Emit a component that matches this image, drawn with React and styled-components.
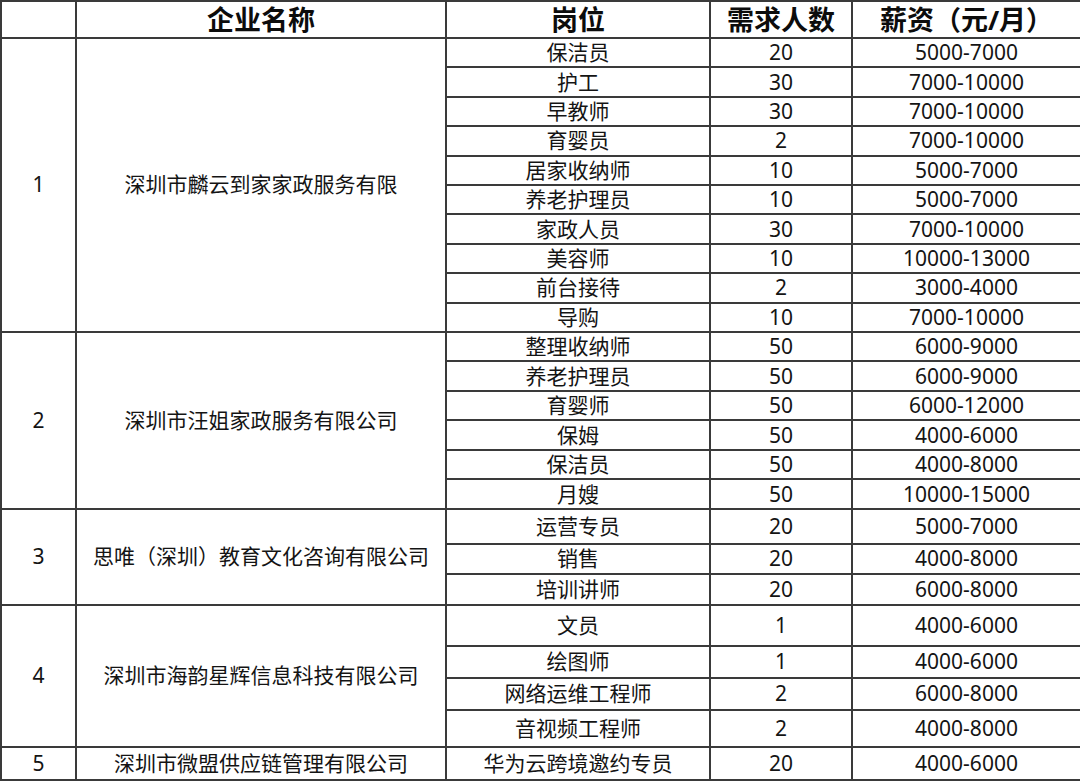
import React from 'react'
import styled, { createGlobalStyle } from 'styled-components'

const GlobalStyle = createGlobalStyle`
  html, body {
    margin: 0;
    padding: 0;
    background: #ffffff;
  }
  body {
    font-family: "Noto Sans", "Noto Sans CJK SC", sans-serif;
    color: #141414;
  }
`

const Table = styled.table`
  width: 1080px;
  table-layout: fixed;
  border-collapse: collapse;
  border: 2px solid #3a3a3a;
`

const Col = styled.col`
  width: ${props => props.$w}px;
`

const Row = styled.tr`
  height: ${props => props.$h}px;
`

const HeadCell = styled.th`
  border: 2px solid #3a3a3a;
  padding: 0;
  font-size: 27px;
  font-weight: 700;
  line-height: 1;
  text-align: center;
  vertical-align: middle;
  color: #0c0c0c;
`

const Cell = styled.td`
  border: 2px solid #3a3a3a;
  padding: 0;
  font-size: 21px;
  line-height: 1;
  text-align: center;
  vertical-align: middle;
  white-space: nowrap;
`

const columns = [75, 370, 264, 142, 229]

const companies = [
    {
        no: 1,
        name: '深圳市麟云到家家政服务有限',
        rows: [
            ['保洁员', '20', '5000-7000', 29.4],
            ['护工', '30', '7000-10000', 29.4],
            ['早教师', '30', '7000-10000', 29.4],
            ['育婴员', '2', '7000-10000', 29.4],
            ['居家收纳师', '10', '5000-7000', 29.4],
            ['养老护理员', '10', '5000-7000', 29.4],
            ['家政人员', '30', '7000-10000', 29.4],
            ['美容师', '10', '10000-13000', 29.4],
            ['前台接待', '2', '3000-4000', 29.4],
            ['导购', '10', '7000-10000', 29.4]
        ]
    },
    {
        no: 2,
        name: '深圳市汪姐家政服务有限公司',
        rows: [
            ['整理收纳师', '50', '6000-9000', 29.5],
            ['养老护理员', '50', '6000-9000', 29.5],
            ['育婴师', '50', '6000-12000', 29.5],
            ['保姆', '50', '4000-6000', 29.5],
            ['保洁员', '50', '4000-8000', 29.5],
            ['月嫂', '50', '10000-15000', 29.5]
        ]
    },
    {
        no: 3,
        name: '思唯（深圳）教育文化咨询有限公司',
        rows: [
            ['运营专员', '20', '5000-7000', 35],
            ['销售', '20', '4000-8000', 30],
            ['培训讲师', '20', '6000-8000', 31]
        ]
    },
    {
        no: 4,
        name: '深圳市海韵星辉信息科技有限公司',
        rows: [
            ['文员', '1', '4000-6000', 41],
            ['绘图师', '1', '4000-6000', 32],
            ['网络运维工程师', '2', '6000-8000', 32],
            ['音视频工程师', '2', '4000-8000', 37]
        ]
    },
    {
        no: 5,
        name: '深圳市微盟供应链管理有限公司',
        rows: [
            ['华为云跨境邀约专员', '20', '4000-6000', 33]
        ]
    }
]

const App = () => {
    return <>
        <GlobalStyle />
        <Table>
            <colgroup>
                {columns.map((w, i) => <Col key={i} $w={w} />)}
            </colgroup>
            <thead>
                <Row $h={37}>
                    <HeadCell></HeadCell>
                    <HeadCell>企业名称</HeadCell>
                    <HeadCell>岗位</HeadCell>
                    <HeadCell>需求人数</HeadCell>
                    <HeadCell>薪资（元/月）</HeadCell>
                </Row>
            </thead>
            <tbody>
                {companies.map(company => company.rows.map((row, index) => (
                    <Row key={company.no + '-' + index} $h={row[3]}>
                        {index === 0 && <Cell rowSpan={company.rows.length}>{company.no}</Cell>}
                        {index === 0 && <Cell rowSpan={company.rows.length}>{company.name}</Cell>}
                        <Cell>{row[0]}</Cell>
                        <Cell>{row[1]}</Cell>
                        <Cell>{row[2]}</Cell>
                    </Row>
                )))}
            </tbody>
        </Table>
    </>
}

export default App
